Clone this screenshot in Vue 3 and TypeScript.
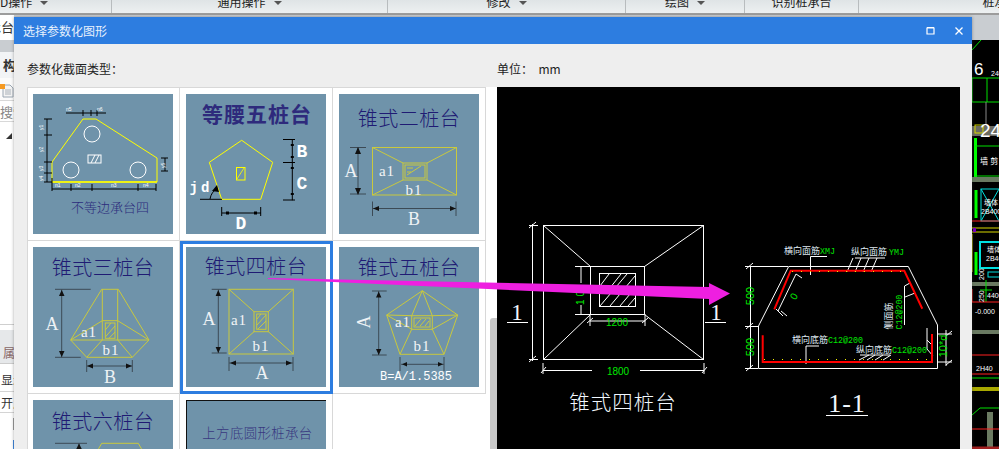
<script setup lang="ts">
const tools = [
  { label: 'D操作', width: 112, arrow: true, first: true },
  { label: '通用操作', width: 276, arrow: true },
  { label: '修改', width: 238, arrow: true },
  { label: '绘图', width: 119, arrow: true },
  { label: '识别桩承台', width: 114, arrow: false },
  { label: '桩承台二次编辑', width: 332, arrow: false },
]
</script>

<template>
  <div class="app">
    <header class="toolbar">
      <div v-for="t in tools" :key="t.label" class="tool" :class="{ first: t.first }" :style="{ width: t.width + 'px' }">
        <span class="tool-label">{{ t.label }}</span><i v-if="t.arrow" class="caret"></i>
      </div>
    </header>
    <div class="workspace">
      <aside class="side">
        <div class="side-tab">承台</div>
        <div class="side-gap"></div>
        <div class="side-head">构</div>
        <div class="side-icon">
          <svg width="14" height="14" viewBox="0 0 14 14">
            <path d="M3 1h7l3 3v9H3z" fill="#f4f4f4" stroke="#9aa6b2" />
            <path d="M5 6h6M5 8h6M5 10h6" stroke="#a8b0b8" />
            <rect x="0" y="0" width="5" height="5" fill="#f59a23" />
          </svg>
        </div>
        <div class="side-search">搜索</div>
        <div class="side-tree"><i class="tree-tri"></i></div>
        <div class="side-props">属性</div>
        <div class="side-row">显示</div>
        <div class="side-row short">开启</div>
        <div class="side-rest"><i class="side-mark"></i><i class="side-blue"></i></div>
      </aside>
      <div class="canvas-col">
        <div class="canvas-top"></div>
        <div class="canvas">
          <svg class="cad" width="27" height="409" viewBox="0 0 27 409">
            <path class="g" d="M0 10 9 0M0 38H27M0 62H27M0 38V62M15 38V62" />
            <path d="M14 62V85" stroke="#888" />
            <text class="w" x="2" y="35" font-size="17">6</text>
            <text class="w" x="19" y="36" font-size="7">240</text>
            <rect x="0" y="86" width="27" height="10" fill="#6b6b62" />
            <rect x="3" y="85" width="8" height="8" fill="none" stroke="#d8d800" />
            <text class="w" x="8" y="97" font-size="19">24</text>
            <path d="M3.5 98V137" stroke="#00ff00" stroke-width="3" />
            <path class="g" d="M3 106H27M3 136H27" />
            <text class="w" x="8" y="124" font-size="8">墙 剪</text>
            <rect x="0" y="137" width="27" height="5" fill="#6a7a62" />
            <path d="M4 150V178M4 212V235" stroke="#00ff00" stroke-width="3" />
            <rect x="9" y="149" width="20" height="32" fill="none" stroke="#00e0e0" />
            <path d="M9 149 27 181M9 181 27 149" stroke="#00e0e0" />
            <text class="w" x="12" y="165" font-size="7">墙体</text>
            <text class="w" x="9" y="174" font-size="7">2B400</text>
            <path d="M0 181H27" stroke="#ff2020" />
            <path d="M0 188H27M0 192H27" stroke="#d8d800" />
            <rect x="1" y="188" width="3" height="4" fill="#8000c0" />
            <rect x="8" y="202" width="21" height="26" fill="none" stroke="#00e0e0" stroke-width="2" />
            <text class="w" x="15" y="212" font-size="7">墙体</text>
            <text class="w" x="14" y="221" font-size="7">2B40</text>
            <path d="M0 194V232" stroke="#d8d800" />
            <rect x="16" y="232" width="14" height="5" fill="none" stroke="#00e0e0" />
            <text class="w" transform="translate(12 240) rotate(-90)" font-size="7">200</text>
            <rect x="0" y="242" width="27" height="4" fill="#6a7a62" />
            <path class="g" d="M14 240V262M8 250H20" />
            <path d="M0 249V262H27" stroke="#ff2020" fill="none" />
            <text class="w" transform="translate(12 262) rotate(-90)" font-size="7">250</text>
            <text class="w" x="15" y="258" font-size="7">4400</text>
            <text class="w" x="3" y="274" font-size="7">-0.000</text>
            <rect x="0" y="290" width="27" height="4" fill="#6a7a62" />
            <path d="M0 315H27M0 334H27" stroke="#ff2020" />
            <text class="w" x="4" y="331" font-size="7">2H40</text>
            <path d="M0 338H27" stroke="#00e000" />
            <rect x="0" y="347" width="27" height="4" fill="#a8a800" />
            <path class="g" d="M0 375 8 368H27" />
            <rect x="15" y="372" width="6" height="37" fill="#6b7b62" />
            <path d="M0 389H27" stroke="#ff2020" />
            <path d="M0 408H27" stroke="#a02020" stroke-width="3" />
          </svg>
        </div>
      </div>
    </div>

    <section class="dialog">
      <div class="titlebar">
        <span class="title">选择参数化图形</span>
        <svg class="win-btn" width="10" height="10" viewBox="0 0 10 10"><path d="M1 2h7v6H1zM1 1.5h7" fill="none" stroke="#fff" stroke-width="1.2" /></svg>
        <svg class="win-btn last" width="10" height="10" viewBox="0 0 10 10"><path d="M1.5 1.5l7 7M8.5 1.5l-7 7" fill="none" stroke="#fff" stroke-width="1.3" /></svg>
      </div>
      <div class="labels">
        <span class="label-type">参数化截面类型：</span>
        <span class="label-unit">单位：&nbsp; mm</span>
      </div>
      <div class="content">
        <div class="grid">
          <div class="cell">
            <svg class="thumb" viewBox="0 0 140 140">
              <path class="yb" d="M19 68 50 25H63L124 64V88H19Z" />
              <path class="yb thick" d="M19 88H124" />
              <circle class="wl" cx="59" cy="40" r="8" />
              <circle class="wl" cx="38" cy="76" r="8" />
              <circle class="wl" cx="105" cy="76" r="8" />
              <rect class="wl" x="55" y="61" width="13" height="8" />
              <path class="wl thin" d="M58 69 62 61M62 69 66 61" />
              <path class="bk" d="M19 84V97M38 90V97M59 90V97M105 90V97M123 90V97M19 95H123" />
              <path class="bk" d="M14 25V88M11 25H19M11 41H19M11 68H19M11 79H19M11 88H19" />
              <path class="bk" d="M132 64V77M128 64H135M128 77H135" />
              <path class="bk" d="M33 19H73M50 16V22M58 16V22M64 16V22" />
              <text class="tiny" x="22" y="93">n1</text><text class="tiny" x="42" y="93">n2</text>
              <text class="tiny" x="78" y="93">n3</text><text class="tiny" x="110" y="93">n4</text>
              <text class="tiny" x="33" y="17">n5</text><text class="tiny" x="64" y="17">n6</text>
              <text class="tiny" transform="translate(10 36) rotate(-90)">y1</text>
              <text class="tiny" transform="translate(10 58) rotate(-90)">y2</text>
              <text class="tiny" transform="translate(10 77) rotate(-90)">y3</text>
              <text class="tiny" transform="translate(10 87) rotate(-90)">y4</text>
              <text class="tiny" transform="translate(132 74) rotate(-90)">y5</text>
              <text class="sub" x="77" y="118">不等边承台四</text>
            </svg>
          </div>
          <div class="cell">
            <svg class="thumb" viewBox="0 0 140 140">
              <text class="ttl bold" x="71" y="28">等腰五桩台</text>
              <path class="yb" d="M55.7 46.3 86.7 68.3 74.7 105.3H35.7L23.3 68.3Z" />
              <rect class="yb" x="50.5" y="73.5" width="8.5" height="12.5" />
              <path class="yb thin" d="M51 85 58 74" />
              <path class="bk" d="M106.3 45.3V106.3M97 45.5H109M97 68.5H109M97 106H109" />
              <path class="bk" d="M14 105.3H36M35.7 113V122M74.7 113V122M36 119H75" />
              <path d="M24 105C25 100 27 97 31 95" class="bk" />
              <path d="M106.3 50v2M106.3 62v2M106.3 73v2M106.3 99v2M40 119h3M68 119h3" stroke="#000" stroke-width="3" />
              <path d="M31 91 26 97 33 98Z" fill="#000" />
              <text class="big mono" x="116" y="63">B</text>
              <text class="big mono" x="116" y="95">C</text>
              <text class="big mono" x="55" y="135">D</text>
              <text class="big mono jd" x="15" y="98">jd</text>
            </svg>
          </div>
          <div class="cell">
            <svg class="thumb" viewBox="0 0 140 140">
              <text class="ttl" x="70" y="32">锥式二桩台</text>
              <rect class="yl" x="33.5" y="53.5" width="84" height="47.5" />
              <rect class="yl" x="64" y="69" width="24" height="17" />
              <rect class="yl" x="66" y="71" width="20" height="13" />
              <path class="yl" d="M33.5 53.5 64 69M117.5 53.5 88 69M33.5 101 64 86M117.5 101 88 86M68 81 82 72M68 74H74M68 78H72" />
              <path class="dk" d="M19 53.5V100M11 53.5H27M11 100H27M33.5 107.5V122M117 107.5V122M34 114.5H117" />
              <path class="ah" d="M19 53 16 60H22ZM19 101 16 94H22ZM34 114.5 40 112V117ZM117 114.5 111 112V117Z" />
              <text class="big" x="12" y="83">A</text>
              <text class="mid" x="48" y="82">a1</text>
              <text class="mid" x="75" y="101">b1</text>
              <text class="big" x="75" y="131">B</text>
            </svg>
          </div>
          <div class="cell">
            <svg class="thumb" viewBox="0 0 140 140">
              <text class="ttl" x="70" y="28">锥式三桩台</text>
              <path class="yl" d="M68.7 42.3H85.3L116 93 99.3 110.3H53.7L37.7 93Z" />
              <path class="yl" d="M37.7 93H116M69.3 42.3V93M84.7 42.3V93M69.3 73.7H84.7M69.3 73.7 37.7 93M84.7 73.7 116 93M69.3 93 53.7 110.3M84.7 93 99.3 110.3" />
              <rect class="hatch" x="72.3" y="76" width="9.7" height="15.3" />
              <path class="yl" d="M72.3 83 78 76M72.3 90 82 79M76 91.3 82 85" />
              <path class="dk" d="M22 42.3H57.7M28.7 42.3V110.3M22 110.3H47.7M53.7 113V125M99.3 113V125M54 119H99" />
              <path class="ah" d="M28.7 43 26 49H31.5ZM28.7 110 26 104H31.5ZM54 119 60 116.5V121.5ZM99 119 93 116.5V121.5Z" />
              <text class="big" x="19" y="83">A</text>
              <text class="mid" x="56" y="90">a1</text>
              <text class="mid" x="78" y="108">b1</text>
              <text class="big" x="77" y="136">B</text>
            </svg>
          </div>
          <div class="cell selected">
            <svg class="thumb" viewBox="0 0 140 140">
              <text class="ttl" x="70" y="27">锥式四桩台</text>
              <rect class="yl" x="43" y="42.3" width="64.3" height="64.7" />
              <rect class="yl" x="68" y="64.7" width="14.3" height="20" />
              <rect class="yl" x="70.7" y="67" width="9.3" height="15.3" />
              <path class="yl" d="M43 42.3 68 64.7M107.3 42.3 82.3 64.7M43 107 68 84.7M107.3 107 82.3 84.7M71 72 75 67M71 78 80 68M72 82 80 74" />
              <path class="dk" d="M32.3 42.3V106M25.7 42.3H40.7M25.7 106H40.7M43 110V124M107 110V124M43 116H107" />
              <path class="ah" d="M32.3 43 29.6 49H35ZM32.3 106 29.6 100H35ZM44 116 50 113.5V118.5ZM106 116 100 113.5V118.5Z" />
              <text class="big" x="23" y="78">A</text>
              <text class="mid" x="53" y="78">a1</text>
              <text class="mid" x="75" y="104">b1</text>
              <text class="big" x="76" y="132">A</text>
            </svg>
          </div>
          <div class="cell">
            <svg class="thumb" viewBox="0 0 140 140">
              <text class="ttl" x="70" y="28">锥式五桩台</text>
              <path class="yl" d="M83.3 43.7 118.7 68 105 107.3H61L47.7 68Z" />
              <rect class="yl" x="72.7" y="68.7" width="20.6" height="13.6" />
              <rect class="hatch" x="75" y="71" width="16" height="9" />
              <path class="yl" d="M83.3 43.7 72.7 68.7M83.3 43.7 93.3 68.7M47.7 68 72.7 68.7M118.7 68 93.3 68.7M47.7 68 72.7 82.3M118.7 68 93.3 82.3M61 107.3 72.7 82.3M105 107.3 93.3 82.3M76 79 82 72M81 79 87 72M86 79 90 74" />
              <path class="dk" d="M39.7 44V108M33 44H47.7M33 108H47.7M61 110V124M105 110V124M62 117.3H105" />
              <path class="ah" d="M39.7 44.5 37 50.5H42.4ZM39.7 108 37 102H42.4ZM63 117.3 68 115V119.6ZM104 117.3 99 115V119.6Z" />
              <text class="big" transform="translate(31 75) rotate(-90)">A</text>
              <text class="mid" x="64" y="80">a1</text>
              <text class="mid" x="83" y="104">b1</text>
              <text class="eq" x="77" y="133">B=A/1.5385</text>
            </svg>
          </div>
          <div class="cell">
            <svg class="thumb" viewBox="0 0 140 140">
              <text class="ttl" x="70" y="29">锥式六桩台</text>
              <path class="yl" d="M68.7 43.3H105.3L125 78M68.7 43.3 49 78" />
              <path class="dk" d="M22 43.3H54M46 43.3V60" />
              <path class="ah" d="M46 43.5 43 49.5H49Z" />
            </svg>
          </div>
          <div class="cell">
            <svg class="thumb framed" viewBox="0 0 140 140">
              <text class="sub wide" x="71" y="37">上方底圆形桩承台</text>
            </svg>
          </div>
        </div>
        <div class="scroll"><div class="scroll-thumb"></div></div>
        <div class="preview">
          <svg width="463" height="362" viewBox="0 0 463 362">
            <g transform="translate(-497 -87)">
              <g class="cw">
                <rect x="543.5" y="225.5" width="160" height="134" />
                <rect x="590.5" y="266.5" width="54" height="48" />
                <rect x="599.5" y="273.5" width="36" height="33" />
                <path d="M543.5 225.5 590.5 266.5M703.5 225.5 644.5 266.5M543.5 359.5 590.5 314.5M703.5 359.5 644.5 314.5" />
                <path d="M600 286 609 274M606 293 621 274M600 306 627 274M610 306 635 276M620 306 635 288M628 306 635 298" />
                <path d="M532.5 224V361M529 225.5H538M529 359.5H538M529 228 536 222M529 362 536 356" />
                <path d="M543 370.5H704M541 373 546 367M702 373 707 367M543 363V374M704 363V374" />
                <path d="M581 266V314M575 266.5H590M575 314.5H590M590 314V326M645 314V326M590 321H645M587 323 593 318M642 323 648 318" />
                <path d="M507 322.5H528M705 322.5H726" />
                <path d="M750.5 266V368M745 266.5H788M745 326.5H758M745 368.5H758M746 269 753 263M746 329 753 323M746 371 753 365" />
                <path d="M758.5 368.5V326 L788.7 266.5H908.3L937.5 325V368.5H758.5Z" />
                <path d="M937 334H952M937 362H952M946 330V366M946 336 952 331M946 365 952 360" />
                <path d="M826 415.5H868" />
                <path d="M810.5 275V256.5H827M847 272 853 258M855 272 861 258M863 272 869 258M871 272 877 258M855 258H885" />
                <path d="M796 274 778 311M796 274 802 278M776 309 783 316M781 311 787 316" />
                <path d="M904.5 325V286L910 283M905 297 915 293" />
                <path d="M927 328V349L933 356M927 340 932 345" />
                <path d="M806 364V346H819" />
                <path d="M859 360 869 355M867 360 875 355M875 360 883 355M883 360 891 355M860 355H890" />
              </g>
              <path class="red" d="M774.3 309.3 790.7 270.7H904.3L922.3 308.7" />
              <path class="red" d="M762.7 335.3V362H932V334" />
              <path class="dots" d="M764 359.5H930M792 271.5H902" />
              <rect x="592" y="365" width="48" height="11" fill="#000" />
              <rect x="578" y="283" width="7" height="22" fill="#000" />
              <text class="gt" x="618" y="375">1800</text>
              <text class="gt" x="617" y="326">1200</text>
              <text class="gt" transform="translate(584 298) rotate(-90)">1 0</text>
              <text class="gt lg" transform="translate(754 296) rotate(-90)">500</text>
              <text class="gt lg" transform="translate(754 347) rotate(-90)">500</text>
              <text class="gt lg" transform="translate(947 346) rotate(-90)">10*d</text>
              <text class="gt" transform="translate(797 298) rotate(-60)">0</text>
              <text class="big-w ser" x="517" y="320">1</text>
              <text class="big-w ser" x="716" y="320">1</text>
              <text class="big-w cjk" x="623" y="410">锥式四桩台</text>
              <text class="big-w ser wide1" x="847" y="412">1-1</text>
              <text class="lbl" x="784" y="254">横向面筋<tspan class="gs">XMJ</tspan></text>
              <text class="lbl" x="851" y="255">纵向面筋 <tspan class="gs">YMJ</tspan></text>
              <text class="lbl" x="792" y="343">横向底筋<tspan class="gs">C12@200</tspan></text>
              <text class="lbl" x="856" y="353">纵向底筋<tspan class="gs">C12@200</tspan></text>
              <text class="lbl" transform="translate(892 329.5) rotate(-90)">侧面筋</text>
              <text class="lbl" transform="translate(902 329.5) rotate(-90)"><tspan class="gs">C12@200</tspan></text>
            </g>
          </svg>
        </div>
      </div>
    </section>

    <svg class="arrow" width="999" height="449" viewBox="0 0 999 449">
      <path d="M268 278 709 287V283L730 293.5 709 305V299L268 279Z" fill="#ee1fe0" />
    </svg>
  </div>
</template>

<style>
html, body { margin: 0; padding: 0; }
</style>

<style scoped>
.app {
  position: relative;
  width: 999px;
  height: 449px;
  overflow: hidden;
  background: #fff;
  font-family: "Noto Sans CJK SC", "Liberation Sans", sans-serif;
}
.toolbar {
  display: flex;
  height: 15px;
  box-sizing: border-box;
  overflow: hidden;
  background: linear-gradient(#dfe4e6, #edf0f1);
  border-bottom: 2px solid #9c9c9c;
}
.tool {
  position: relative;
  flex: none;
  display: flex;
  justify-content: center;
  gap: 8px;
  box-sizing: border-box;
  border-right: 1px solid #b8bcbe;
  font-size: 12px;
  line-height: 12px;
  color: #222;
}
.tool.first { justify-content: flex-start; }
.tool-label { margin-top: -4px; white-space: nowrap; }
.caret {
  width: 0;
  height: 0;
  margin-top: 1px;
  border: 4px solid transparent;
  border-top: 4px solid #555;
}
.workspace { display: flex; height: 434px; }
.side {
  width: 14px;
  flex: none;
  display: flex;
  flex-direction: column;
  overflow: hidden;
  background: #fff;
  font-size: 14px;
  color: #333;
  white-space: nowrap;
}
.side-tab { height: 25px; padding-top: 2px; box-sizing: border-box; font-size: 13px; text-indent: -12px; background: #fff; }
.side-gap { height: 12px; background: #c9cdd1; }
.side-head { height: 26px; line-height: 26px; font-weight: 700; background: #f2f4f6; text-indent: 3px; font-size: 13px; }
.side-icon { height: 22px; padding-top: 4px; box-sizing: border-box; background: #fbfbfb; }
.side-search { height: 22px; line-height: 21px; color: #888; border-top: 1px solid #d8d8d8; border-bottom: 1px solid #d8d8d8; box-sizing: border-box; font-size: 13px; }
.side-tree { height: 203px; padding: 11px 0 0 6px; box-sizing: border-box; border-bottom: 1px solid #cfcfcf; }
.tree-tri {
  display: block;
  width: 0;
  height: 0;
  border-left: 6px solid transparent;
  border-bottom: 6px solid #333;
}
.side-props { height: 39px; line-height: 46px; background: #e6e8ea; border-top: 5px solid #fff; color: #866; font-size: 12px; text-indent: 3px; border-bottom: 1px solid #ccc; box-sizing: border-box; }
.side-row { height: 28px; line-height: 32px; font-size: 12px; border-bottom: 1px solid #d4d4d4; box-sizing: border-box; text-indent: 1px; }
.side-row.short { height: 21px; line-height: 22px; }
.side-rest { flex: 1; position: relative; background: #fff; }
.side-mark { position: absolute; left: 13px; top: 5px; width: 1px; height: 12px; background: #999; }
.side-blue { position: absolute; left: 13px; top: 27px; width: 1px; height: 12px; background: #3a86e0; }
.canvas-col { flex: 1; display: flex; flex-direction: column; align-items: flex-end; }
.canvas-top { width: 100%; height: 25px; background: #c9cdd1; }
.canvas { flex: 1; width: 27px; background: #000; overflow: hidden; }
.cad { display: block; }
.cad path { fill: none; }
.g { stroke: #00e000; fill: none; }
.w { fill: #fff; font-family: "Liberation Sans", "Noto Sans CJK SC", sans-serif; }

.dialog {
  position: absolute;
  left: 14px;
  top: 17px;
  width: 958px;
  height: 432px;
  display: flex;
  flex-direction: column;
  background: #eeeeee;
  box-shadow: 0 0 3px rgba(60, 60, 60, .45);
}
.titlebar {
  flex: none;
  height: 27px;
  display: flex;
  align-items: center;
  padding: 0 8px 0 9px;
  background: #2d7de0;
  color: #e8f1fc;
  font-size: 12px;
}
.title { flex: 1; }
.win-btn { margin-left: 12px; }
.win-btn.last { margin-left: 18px; }
.labels {
  flex: none;
  height: 43px;
  display: flex;
  align-items: center;
  padding: 6px 0 0 13px;
  box-sizing: border-box;
  font-size: 12px;
  color: #222;
}
.label-type { width: 470px; }
.content {
  flex: 1;
  min-height: 0;
  display: flex;
  padding-left: 13px;
  overflow: hidden;
}
.grid {
  flex: none;
  width: 459px;
  display: grid;
  grid-template-columns: repeat(3, 153px);
  grid-auto-rows: 153px;
  align-content: start;
  background: #fff;
  border-top: 1px solid #d8d8d8;
  box-shadow: inset 1px 0 #d8d8d8;
  overflow: hidden;
}
.cell {
  padding: 6px;
  box-sizing: border-box;
  border-right: 1px solid #d8d8d8;
  border-bottom: 1px solid #d8d8d8;
}
.cell.selected { outline: 3px solid #2d7de0; outline-offset: -3px; }
.thumb { display: block; width: 140px; height: 140px; background: #6f93aa; }
.thumb.framed { border-top: 1px solid #111; border-left: 1px solid #111; box-sizing: border-box; }
.scroll {
  flex: none;
  width: 11px;
  padding: 231px 0 0 4px;
  box-sizing: border-box;
  background: #fff;
}
.scroll-thumb { height: 140px; background: #c8c8c8; border-radius: 3px 0 0 0; }
.preview { flex: none; width: 463px; background: #000; }
.preview svg { display: block; }

.yb { fill: none; stroke: #ffff00; stroke-width: 1; }
.thick { stroke-width: 1.6; }
.thin { stroke-width: .8; }
.yl, .hatch { fill: none; stroke: #c9c93e; stroke-width: 1; }
.wl { fill: none; stroke: #fff; stroke-width: 1; }
.bk { fill: none; stroke: #000; stroke-width: 1; }
.dk { fill: none; stroke: #3c4a55; stroke-width: 1; }
.ah { fill: #111; }
.tiny { font-size: 5px; fill: #fff; font-family: "Liberation Sans", sans-serif; }
.sub { font-size: 13px; fill: #2c2c7c; text-anchor: middle; font-weight: 300; }
.sub.wide { font-size: 13.5px; letter-spacing: .4px; fill: #383880; }
.ttl { font-size: 20px; fill: #1f1b74; text-anchor: middle; letter-spacing: .5px; font-weight: 300; }
.ttl.bold { font-size: 21px; font-weight: 700; letter-spacing: 1px; fill: #2e2a7c; }
.big { font-family: "Liberation Serif", serif; font-size: 18px; fill: #eef2f5; text-anchor: middle; }
.mono { font-family: "Liberation Mono", monospace; font-weight: 700; fill: #fff; }
.jd { font-size: 14px; letter-spacing: 3px; }
.mid { font-family: "Liberation Serif", serif; font-size: 15px; fill: #f2f4f6; text-anchor: middle; letter-spacing: 1px; }
.eq { font-family: "Liberation Mono", monospace; font-size: 12px; fill: #fff; text-anchor: middle; }

.cw { fill: none; stroke: #fff; stroke-width: 1; }
.red { fill: none; stroke: #ff0000; stroke-width: 2; }
.dots { fill: none; stroke: #f0f000; stroke-width: 1; stroke-dasharray: 1 8; }
.gt { fill: #00e800; font-size: 10px; font-family: "Liberation Sans", sans-serif; text-anchor: middle; }
.gt.lg { font-size: 11px; }
.big-w { fill: #f2f8ff; text-anchor: middle; }
.ser { font-family: "Liberation Serif", serif; font-size: 23px; font-weight: 400; }
.wide1 { font-size: 26px; letter-spacing: 1px; }
.cjk { font-size: 20.5px; letter-spacing: 1px; font-weight: 300; }
.lbl { fill: #dfe8f0; font-size: 9px; }
.gs { fill: #00e800; font-family: "Liberation Mono", monospace; font-size: 8.3px; }

.arrow { position: absolute; left: 0; top: 0; pointer-events: none; }
</style>
